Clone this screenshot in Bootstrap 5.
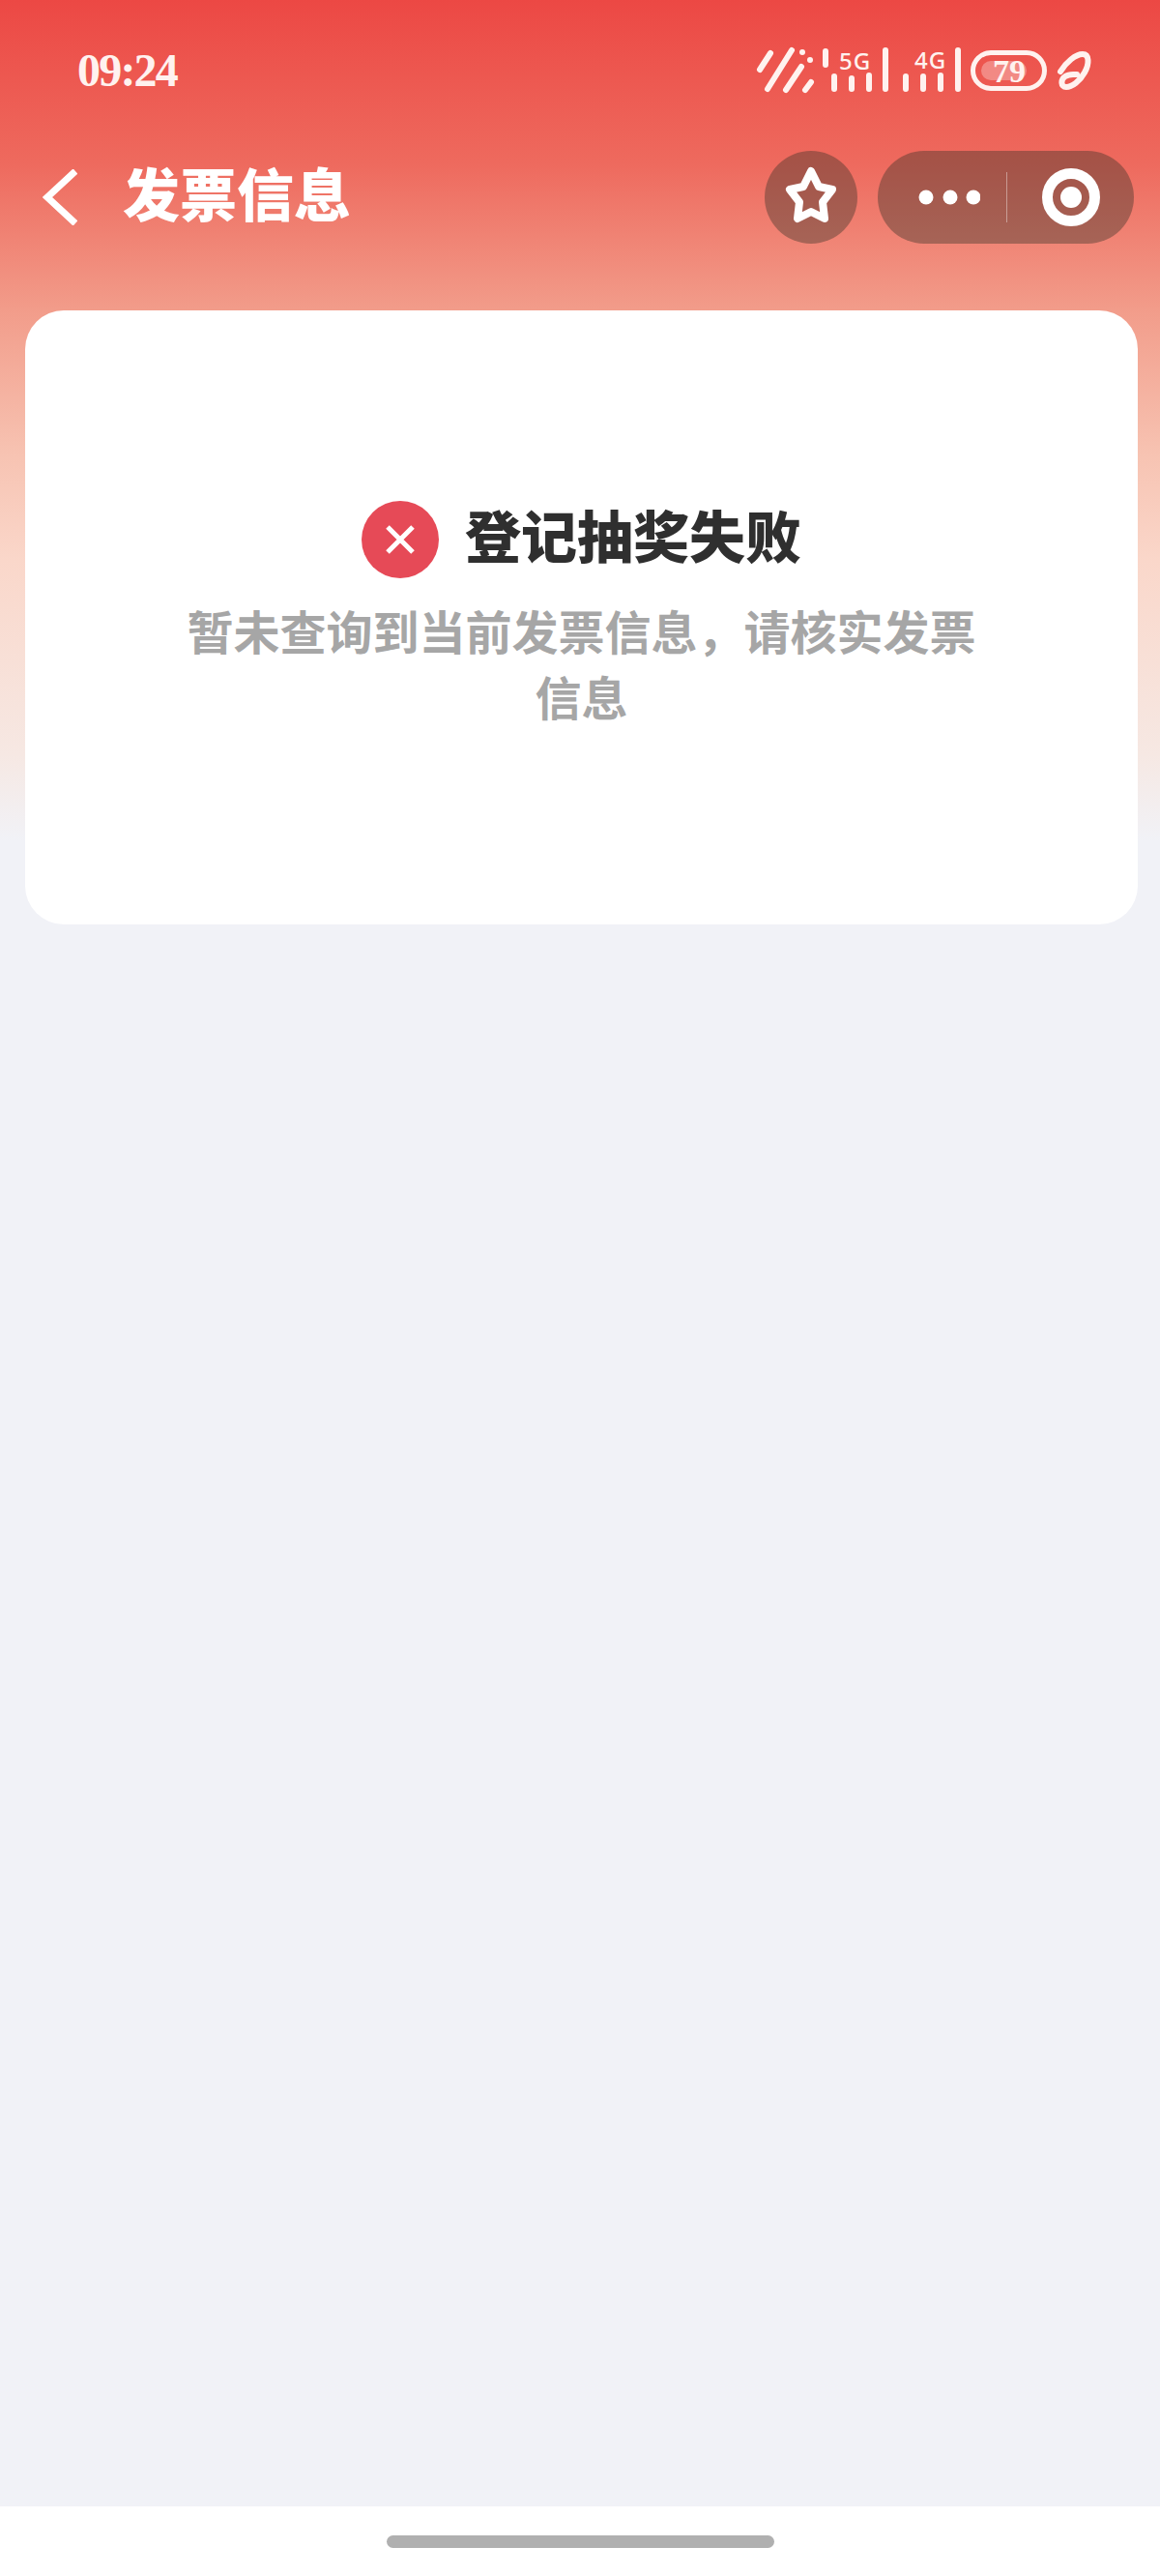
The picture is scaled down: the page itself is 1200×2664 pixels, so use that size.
<!DOCTYPE html>
<html lang="zh-CN">
<head>
<meta charset="utf-8">
<title>发票信息</title>
<link href="https://cdn.jsdelivr.net/npm/bootstrap@5.3.0/dist/css/bootstrap.min.css" rel="stylesheet">
<style>
html, body { height: 100%; }
body {
  margin: 0;
  font-family: "Liberation Serif", "Noto Sans CJK SC", serif;
  background: linear-gradient(180deg, #ec4844 0, #ee6a5e 170px, #f29c8a 320px, #f7c3b2 470px, #fad7ca 580px, #f6e8e3 780px, #f1f2f7 870px, #f1f2f7 100%);
  background-color: #f1f2f7;
}
.phone { width: 1200px; height: 2664px; }
.status-row { height: 146px; padding: 0 65px 0 80px; }
.clock { font-size: 48px; font-weight: 700; color: #fff2ef; line-height: 1; letter-spacing: -1.800px; }
.nav-row { height: 116px; padding: 0 27px 0 44px; }
.back-gap { margin-right: 47px; }
.page-title { font-size: 59px; font-weight: 900; color: #fff; line-height: 1; margin: 0; }
.round-btn { width: 96px; height: 96px; background: rgba(54,50,40,.4); margin-right: 21px; }
.capsule { width: 265px; height: 96px; background: rgba(54,50,40,.4); }
.capsule-left { width: 133px; }
.dots-gap { margin-right: 27px; }
.capsule-div { width: 1px; height: 52px; background: rgba(255,255,255,.4); }
.capsule-right { width: 131px; }
.result-box { margin: 59px 23px 0 26px; height: 635px; border-radius: 40px; padding-top: 197px; background: #fff; }
.fail-row { gap: 27px; height: 80px; }
.fail-icon { width: 80px; height: 80px; background: #e64a57; }
.fail-title { font-size: 58px; font-weight: 900; color: #2f2f2f; line-height: 1; margin: 0; }
.fail-text { width: 830px; font-size: 48px; font-weight: 700; color: #a6a6a6; line-height: 68px; text-align: center; margin: 24px 0 0; }
.home-area { height: 72px; background: #fff; }
.home-bar { width: 401px; height: 13px; border-radius: 7px; background: #b0b0b0; }
.sb-text { font-family: "Noto Sans", sans-serif; font-size: 24px; font-weight: 500; fill: #fff2ef; letter-spacing: 1px; }
.sb-batt { font-family: "Liberation Serif", serif; font-size: 34px; font-weight: 700; fill: #fff2ef; }
</style>
</head>
<body>
<div class="phone d-flex flex-column">
  <div class="status-row d-flex align-items-center justify-content-between flex-shrink-0">
    <span class="clock">09:24</span>
    <svg width="355" height="56" viewBox="780 45 355 56" fill="none" stroke="#fff2ef" stroke-linecap="round" stroke-width="6" aria-hidden="true">
      <path d="M786 72 797 55M794 92 819 52M813 93 829 69M833 93 839 85M854 53V67"/>
      <circle cx="830" cy="54" r="3" fill="#fff2ef" stroke="none"/>
      <circle cx="838" cy="62" r="3" fill="#fff2ef" stroke="none"/>
      <text class="sb-text" x="868" y="72" stroke="none">5G</text>
      <path d="M863 79V92M881 81V92M899 78V92M916 52V92"/>
      <text class="sb-text" x="946" y="71" stroke="none">4G</text>
      <path d="M937 79V92M955 79V92M973 78V92M991 52V92"/>
      <rect x="1006.500" y="54.500" width="74" height="37" rx="18.500" stroke-width="5"/>
      <rect x="1015" y="63" width="47" height="20" rx="10" fill="#fff" fill-opacity=".3" stroke="none"/>
      <text class="sb-batt" x="1044" y="85" text-anchor="middle" stroke="none">79</text>
      <path d="M1097 74C1103 64 1113 56 1120 56 1127 56 1127 66 1122 75 1117 84 1109 90 1103 90 1097 90 1097 82 1102 79 1106 76 1110 77 1114 77" stroke-width="6"/>
    </svg>
  </div>

  <nav class="nav-row d-flex align-items-center flex-shrink-0">
    <svg class="back-gap" width="36" height="58" viewBox="0 0 36 58" fill="none" stroke="#fff" stroke-width="7" aria-hidden="true">
      <path d="M34 2 5 29 34 56"/>
    </svg>
    <h1 class="page-title">发票信息</h1>
    <div class="ms-auto d-flex align-items-center">
      <div class="round-btn rounded-circle d-flex align-items-center justify-content-center">
        <svg width="96" height="96" viewBox="0 0 96 96" fill="none" stroke="#fff" stroke-width="8" stroke-linejoin="round" aria-hidden="true">
          <path d="M48 21 56 37 70 40 60 53 62 70 48 63 34 70 36 53 26 40 40 37Z"/>
        </svg>
      </div>
      <div class="capsule rounded-pill d-flex align-items-center">
        <div class="capsule-left d-flex justify-content-end">
          <svg class="dots-gap" width="64" height="16" viewBox="0 0 64 16" fill="#fff" aria-hidden="true">
            <circle cx="8" cy="8" r="7.500"/><circle cx="33" cy="8" r="7.500"/><circle cx="57" cy="8" r="7.500"/>
          </svg>
        </div>
        <div class="capsule-div"></div>
        <div class="capsule-right d-flex justify-content-center">
          <svg width="60" height="60" viewBox="0 0 60 60" aria-hidden="true">
            <circle cx="30" cy="30" r="24.500" fill="none" stroke="#fff" stroke-width="11"/>
            <circle cx="30" cy="30" r="11" fill="#fff"/>
          </svg>
        </div>
      </div>
    </div>
  </nav>

  <main class="result-box d-flex flex-column align-items-center flex-shrink-0">
    <div class="fail-row d-flex align-items-center">
      <span class="fail-icon rounded-circle d-flex align-items-center justify-content-center">
        <svg width="32" height="32" viewBox="0 0 32 32" fill="none" stroke="#fff" stroke-width="5" aria-hidden="true">
          <path d="M3 3 29 29M29 3 3 29"/>
        </svg>
      </span>
      <h2 class="fail-title">登记抽奖失败</h2>
    </div>
    <p class="fail-text">暂未查询到当前发票信息，请核实发票信息</p>
  </main>

  <div class="flex-grow-1"></div>

  <div class="home-area d-flex align-items-center justify-content-center flex-shrink-0">
    <div class="home-bar"></div>
  </div>
</div>
<script src="https://cdn.jsdelivr.net/npm/bootstrap@5.3.0/dist/js/bootstrap.bundle.min.js"></script>
</body>
</html>
